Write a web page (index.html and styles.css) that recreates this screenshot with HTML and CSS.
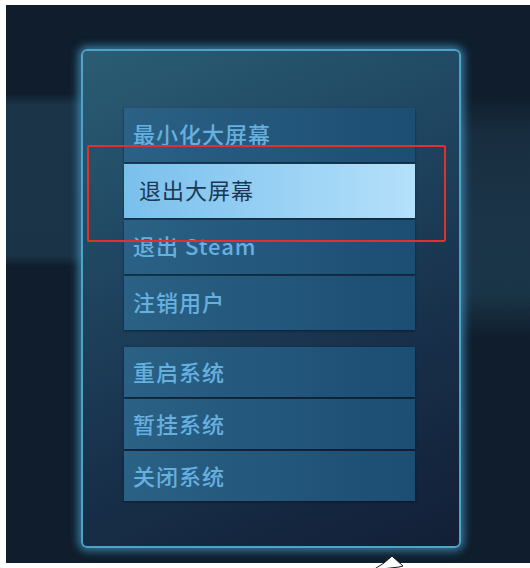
FILE: index.html
```html
<!DOCTYPE html>
<html lang="zh-CN">
<head>
    <meta charset="UTF-8">
    <meta name="viewport" content="width=device-width, initial-scale=1.0">
    <title>大屏幕菜单</title>
    <link rel="stylesheet" href="styles.css">
</head>
<body>
    <div class="screen">
        <div class="panel">
            <div class="menu-group">
                <div class="menu-item tall">最小化大屏幕</div>
                <div class="menu-item tall active">退出大屏幕</div>
                <div class="menu-item tall">退出 Steam</div>
                <div class="menu-item tall">注销用户</div>
            </div>
            <div class="menu-group">
                <div class="menu-item">重启系统</div>
                <div class="menu-item">暂挂系统</div>
                <div class="menu-item">关闭系统</div>
            </div>
        </div>
        <div class="highlight-box"></div>
    </div>
    <svg class="cursor" width="36" height="16" viewBox="0 0 36 16">
        <polygon points="22,2 33,12 29,13 3,16 14,9" fill="#ffffff" stroke="#1a1a1a" stroke-width="1"/>
    </svg>
</body>
</html>
```

FILE: styles.css
```css
body {
    margin: 0;
    background-color: #ffffff;
    font-family: "Noto Sans CJK SC", "Noto Sans", sans-serif;
    overflow: hidden;
}
.screen {
    position: relative;
    margin: 5px 0 0 6px;
    width: 524px;
    height: 558px;
    padding: 44px 0 0 75px;
    box-sizing: border-box;
    background:
        linear-gradient(to bottom, transparent 88px, #1b3447 100px, #1a3346 250px, transparent 262px) left / 90px 100% no-repeat,
        linear-gradient(to bottom, transparent 90px, #182e40 130px, #1b3447 220px, #1a3447 290px, transparent 335px) right / 80px 100% no-repeat,
        #0f1d2c;
}
.panel {
    width: 380px;
    height: 499px;
    box-sizing: border-box;
    border: 2px solid #4fa2c8;
    border-radius: 6px;
    box-shadow: 0 0 9px 3px rgba(70, 160, 205, 0.7);
    background: linear-gradient(155deg, #2a5d74 0%, #1f4560 35%, #18304a 65%, #121f36 100%);
    padding: 57px 0 0 41px;
    display: flex;
    flex-direction: column;
    gap: 17px;
}
.menu-group {
    width: 291px;
    display: flex;
    flex-direction: column;
    gap: 2px;
}
.menu-item {
    height: 50px;
    box-sizing: border-box;
    display: flex;
    align-items: center;
    padding: 0 0 2px 9px;
    font-size: 22px;
    font-weight: 500;
    letter-spacing: 1px;
    color: #66b0e0;
    background: linear-gradient(to right, #2a6184, #1c4d72);
    box-shadow: 0 1px 2px rgba(5, 15, 30, 0.6);
}
.menu-item.tall {
    height: 54px;
    padding-bottom: 4px;
}
.menu-item.active {
    padding-left: 15px;
    font-weight: 400;
    color: #1d3854;
    background: linear-gradient(to right, #7ac0ed, #b4e0fa);
}
.highlight-box {
    position: absolute;
    left: 81px;
    top: 140px;
    width: 359px;
    height: 97px;
    box-sizing: border-box;
    border: 2px solid #e2302b;
    border-radius: 2px;
}
.cursor {
    position: absolute;
    left: 370px;
    top: 554px;
}
```
